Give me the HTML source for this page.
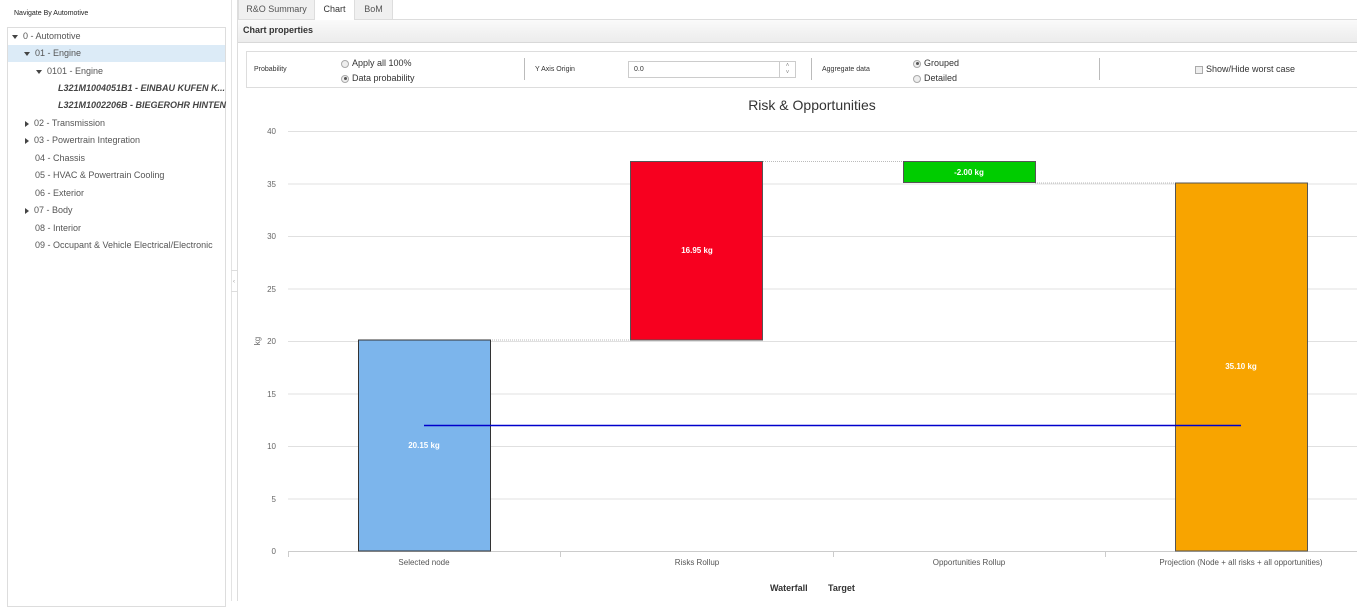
<!DOCTYPE html>
<html><head><meta charset="utf-8"><style>
*{box-sizing:border-box;margin:0;padding:0}
body{width:1357px;height:601px;overflow:hidden;background:#fff;font-family:"Liberation Sans",Arial,sans-serif;position:relative;color:#333}
.abs{position:absolute}
.tree div{position:absolute;font-size:9px;color:#555;white-space:nowrap}
.tri{display:inline-block;width:0;height:0;margin-right:5px;vertical-align:middle}
.down{border-left:3px solid transparent;border-right:3px solid transparent;border-top:4px solid #444}
.right{border-top:3px solid transparent;border-bottom:3px solid transparent;border-left:4px solid #444}
.radio{display:inline-block;width:8px;height:8px;border-radius:50%;border:1px solid #aaa;background:#eee;vertical-align:middle;margin-right:3px;position:relative}
.radio.on:after{content:"";position:absolute;left:1.5px;top:1.5px;width:3px;height:3px;border-radius:50%;background:#555}
.small{font-size:7px;color:#333}
.lbl{font-size:9px;color:#333}
</style></head><body>
<div class="abs" style="left:14px;top:10px;font-size:7px;color:#222">Navigate By Automotive</div>
<div class="abs" style="left:7px;top:27px;width:219px;height:580px;border:1px solid #ddd"></div>
<div class="abs" style="left:8px;top:45px;width:217px;height:17px;background:#dcebf7"></div>
<div class="tree">
<div style="left:12px;top:31px"><span class="tri down"></span>0 - Automotive</div>
<div style="left:24px;top:48px"><span class="tri down"></span>01 - Engine</div>
<div style="left:36px;top:66px"><span class="tri down"></span>0101 - Engine</div>
<div style="left:58px;top:83px;font-weight:bold;font-style:italic;color:#444">L321M1004051B1 - EINBAU KUFEN K...</div>
<div style="left:58px;top:100px;font-weight:bold;font-style:italic;color:#444">L321M1002206B - BIEGEROHR HINTEN</div>
<div style="left:25px;top:118px"><span class="tri right"></span>02 - Transmission</div>
<div style="left:25px;top:135px"><span class="tri right"></span>03 - Powertrain Integration</div>
<div style="left:35px;top:153px">04 - Chassis</div>
<div style="left:35px;top:170px">05 - HVAC &amp; Powertrain Cooling</div>
<div style="left:35px;top:188px">06 - Exterior</div>
<div style="left:25px;top:205px"><span class="tri right"></span>07 - Body</div>
<div style="left:35px;top:223px">08 - Interior</div>
<div style="left:35px;top:240px">09 - Occupant &amp; Vehicle Electrical/Electronic</div>
</div>
<!-- splitter -->
<div class="abs" style="left:231px;top:0;width:1px;height:601px;background:#e3e3e3"></div>
<div class="abs" style="left:237px;top:0;width:1px;height:601px;background:#ddd"></div>
<div class="abs" style="left:231px;top:270px;width:6px;height:22px;border-top:1px solid #ddd;border-bottom:1px solid #ddd;font-size:6px;color:#999;text-align:center;line-height:22px">‹</div>
<!-- tabs -->
<div class="abs" style="left:238px;top:0;width:1119px;height:20px;border-bottom:1px solid #ddd"></div>
<div class="abs" style="left:238px;top:0;width:77px;height:20px;background:#f0f0f0;border:1px solid #ddd;border-top:none;font-size:9px;color:#555;text-align:center;line-height:18px">R&amp;O Summary</div>
<div class="abs" style="left:315px;top:0;width:40px;height:21px;background:#fff;border-right:1px solid #ddd;font-size:9px;color:#333;text-align:center;line-height:18px">Chart</div>
<div class="abs" style="left:355px;top:0;width:38px;height:20px;background:#f0f0f0;border-right:1px solid #ddd;border-bottom:1px solid #ddd;font-size:9px;color:#555;text-align:center;line-height:18px">BoM</div>
<div class="abs" style="left:238px;top:20px;width:1119px;height:23px;background:linear-gradient(#fafafa,#ececec);border-bottom:1px solid #d8d8d8;font-size:9px;font-weight:bold;color:#333;padding-left:5px;line-height:20px">Chart properties</div>
<!-- properties -->
<div class="abs" style="left:246px;top:51px;width:1111px;height:37px;border:1px solid #ddd;border-right:none"></div>
<div class="abs small" style="left:254px;top:66px">Probability</div>
<div class="abs lbl" style="left:341px;top:58px"><span class="radio"></span>Apply all 100%</div>
<div class="abs lbl" style="left:341px;top:73px"><span class="radio on"></span>Data probability</div>
<div class="abs" style="left:524px;top:58px;width:1px;height:22px;background:#bbb"></div>
<div class="abs small" style="left:535px;top:66px">Y Axis Origin</div>
<div class="abs" style="left:628px;top:61px;width:168px;height:17px;border:1px solid #ccc;font-size:7px;padding-left:5px;line-height:15px">0.0</div>
<div class="abs" style="left:779px;top:61px;width:17px;height:17px;border:1px solid #ccc;font-size:6px;color:#888;text-align:center;line-height:7px;padding-top:1px">˄<br>˅</div>
<div class="abs" style="left:811px;top:58px;width:1px;height:22px;background:#bbb"></div>
<div class="abs small" style="left:822px;top:66px">Aggregate data</div>
<div class="abs lbl" style="left:913px;top:58px"><span class="radio on"></span>Grouped</div>
<div class="abs lbl" style="left:913px;top:73px"><span class="radio"></span>Detailed</div>
<div class="abs" style="left:1099px;top:58px;width:1px;height:22px;background:#bbb"></div>
<div class="abs lbl" style="left:1195px;top:64px"><span style="display:inline-block;width:8px;height:8px;border:1px solid #aaa;background:#eee;vertical-align:middle;margin-right:3px"></span>Show/Hide worst case</div>
<!-- chart -->
<svg class="abs" style="left:0;top:0" width="1357" height="601" font-family="Liberation Sans, Arial, sans-serif">
<text x="812" y="110" font-size="14" fill="#333" text-anchor="middle">Risk &amp; Opportunities</text>
<g stroke="#e0e0e0" stroke-width="1">
<line x1="288" y1="131.5" x2="1357" y2="131.5"/><line x1="288" y1="184" x2="1357" y2="184"/>
<line x1="288" y1="236.5" x2="1357" y2="236.5"/><line x1="288" y1="289" x2="1357" y2="289"/>
<line x1="288" y1="341.5" x2="1357" y2="341.5"/><line x1="288" y1="394" x2="1357" y2="394"/>
<line x1="288" y1="446.5" x2="1357" y2="446.5"/><line x1="288" y1="499" x2="1357" y2="499"/>
</g>
<line x1="288" y1="551.5" x2="1357" y2="551.5" stroke="#ccc"/>
<g stroke="#ccc"><line x1="288.5" y1="551" x2="288.5" y2="557"/><line x1="560.5" y1="551" x2="560.5" y2="557"/><line x1="833.5" y1="551" x2="833.5" y2="557"/><line x1="1105.5" y1="551" x2="1105.5" y2="557"/></g>
<g font-size="8" fill="#666" text-anchor="end">
<text x="276" y="134">40</text><text x="276" y="187">35</text><text x="276" y="239">30</text><text x="276" y="292">25</text><text x="276" y="344">20</text><text x="276" y="397">15</text><text x="276" y="449">10</text><text x="276" y="502">5</text><text x="276" y="554">0</text>
</g>
<text x="260" y="341" font-size="8" fill="#666" transform="rotate(-90 260 341)" text-anchor="middle">kg</text>
<g stroke="#bbb" stroke-dasharray="1,1"><line x1="490" y1="340" x2="630" y2="340"/><line x1="763" y1="161.5" x2="903" y2="161.5"/><line x1="1035" y1="183" x2="1175" y2="183"/></g>
<rect x="358.5" y="340" width="132" height="211" fill="#7cb5ec" stroke="#333" stroke-width="1"/>
<rect x="630.5" y="161.5" width="132" height="178.5" fill="#f7001f" stroke="#555" stroke-width="1"/>
<rect x="903.5" y="161.5" width="132" height="21" fill="#00cc00" stroke="#555" stroke-width="1"/>
<rect x="1175.5" y="183" width="132" height="368" fill="#f8a400" stroke="#555" stroke-width="1"/>
<line x1="424" y1="425.5" x2="1241" y2="425.5" stroke="#0000cc" stroke-width="1.5"/>
<g font-size="8" font-weight="bold" fill="#fff" text-anchor="middle">
<text x="424" y="448">20.15 kg</text><text x="697" y="253">16.95 kg</text><text x="969" y="175">-2.00 kg</text><text x="1241" y="369">35.10 kg</text>
</g>
<g font-size="8" fill="#555" text-anchor="middle">
<text x="424" y="565">Selected node</text><text x="697" y="565">Risks Rollup</text><text x="969" y="565">Opportunities Rollup</text><text x="1241" y="565">Projection (Node + all risks + all opportunities)</text>
</g>
<g font-size="9" font-weight="bold" fill="#333"><text x="770" y="591">Waterfall</text><text x="828" y="591">Target</text></g>
</svg>
</body></html>
